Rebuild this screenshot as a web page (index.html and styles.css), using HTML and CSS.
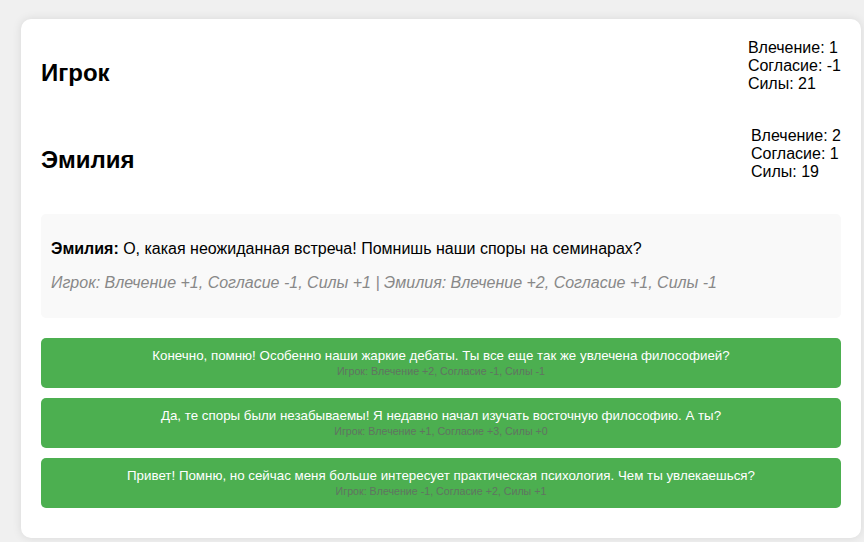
FILE: index.html
```html
<!DOCTYPE html>
<html lang="ru">
<head>
<meta charset="utf-8">
<title>Диалог</title>
<link rel="stylesheet" href="styles.css">
</head>
<body>
<main class="card">
  <section class="row">
    <h2 class="name">Игрок</h2>
    <div class="stats"><div>Влечение: 1</div><div>Согласие: -1</div><div>Силы: 21</div></div>
  </section>
  <section class="row">
    <h2 class="name">Эмилия</h2>
    <div class="stats"><div>Влечение: 2</div><div>Согласие: 1</div><div>Силы: 19</div></div>
  </section>
  <section class="dialog">
    <p class="line"><strong>Эмилия:</strong> О, какая неожиданная встреча! Помнишь наши споры на семинарах?</p>
    <p class="line effects">Игрок: Влечение +1, Согласие -1, Силы +1 | Эмилия: Влечение +2, Согласие +1, Силы -1</p>
  </section>
  <div class="choices">
    <button class="choice">Конечно, помню! Особенно наши жаркие дебаты. Ты все еще так же увлечена философией?<span class="hint">Игрок: Влечение +2, Согласие -1, Силы -1</span></button>
    <button class="choice">Да, те споры были незабываемы! Я недавно начал изучать восточную философию. А ты?<span class="hint">Игрок: Влечение +1, Согласие +3, Силы +0</span></button>
    <button class="choice">Привет! Помню, но сейчас меня больше интересует практическая психология. Чем ты увлекаешься?<span class="hint">Игрок: Влечение -1, Согласие +2, Силы +1</span></button>
  </div>
</main>
</body>
</html>
```
FILE: styles.css
```css
* { box-sizing: border-box; }
html, body { height: 100%; }
body {
  margin: 0;
  padding: 18.7px 3px 0 21px;
  background: #f0f0f0;
  font-family: "Liberation Sans", Arial, sans-serif;
  font-size: 16px;
  color: #000;
  overflow: hidden;
}
.card {
  width: 840px;
  padding: 20px;
  background: #fff;
  border-radius: 10px;
  box-shadow: 0 0 10px rgba(0, 0, 0, 0.1);
}
.row {
  display: flex;
  justify-content: space-between;
  align-items: flex-start;
  margin-bottom: 20px;
}
.name {
  margin: 0.83em 0;
  font-size: 24px;
  font-weight: bold;
}
.dialog {
  margin-bottom: 20px;
  padding: 10px;
  background: #f9f9f9;
  border-radius: 5px;
}
.line { margin: 16px 0; }
.effects { font-style: italic; color: #888; }
.choices { display: flex; flex-direction: column; gap: 10px; margin-bottom: 10px; }
.choice {
  display: block;
  width: 100%;
  height: 50px;
  padding: 9.5px 10px 10.5px;
  border: 0;
  border-radius: 5px;
  background: #4caf50;
  color: #fff;
  font-family: "Liberation Sans", Arial, sans-serif;
  font-size: 13.333px;
  text-align: center;
}
.hint {
  display: block;
  margin-top: 2px;
  font-size: 10.667px;
  color: #666;
  opacity: 0.8;
}
```
